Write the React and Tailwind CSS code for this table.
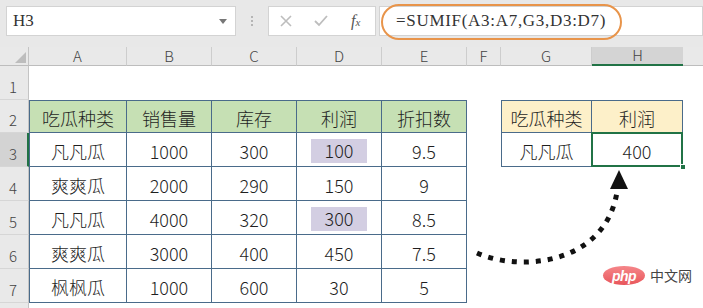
import React from "react";

const colWidths = "grid-cols-[29px_98px_85px_85px_85px_85px_34px_91px_91px_1fr]";
const rowHeights = "grid-rows-[19px_34px_33px_34px_34px_34px_34px_34px_34px]";

const tb = "border-[#4a6b8a]";

// main table rows (A..E)
const mainRows = [
  ["凡凡瓜", "1000", "300", "100", "9.5"],
  ["爽爽瓜", "2000", "290", "150", "9"],
  ["凡凡瓜", "4000", "320", "300", "8.5"],
  ["爽爽瓜", "3000", "400", "450", "7.5"],
  ["枫枫瓜", "1000", "600", "30", "5"],
];
const highlighted = ["100", "300"];

const RowHead = ({ n, active }) => (
  <div
    className={
      active
        ? "bg-[#d3d3d3] border-r-2 border-r-[#217346] border-b border-b-[#d6d6d6] flex items-end pl-[9px] pb-[1px] text-[15px] font-light text-[#444]"
        : "bg-[#e9e9e9] border-r border-r-[#c4c4c4] border-b border-b-[#d6d6d6] flex items-end pl-[9px] pb-[1px] text-[15px] font-light text-[#444]"
    }
  >
    {n}
  </div>
);

const ColHead = ({ label, active }) => (
  <div
    className={
      active
        ? "bg-[#d4d4d4] border-b-2 border-b-[#217346] flex items-center justify-center text-[15px] font-light text-[#444]"
        : "bg-[#e9e9e9] border-r border-r-[#cdcdcd] border-b border-b-[#bdbdbd] flex items-center justify-center text-[15px] font-light text-[#444]"
    }
  >
    {label}
  </div>
);

const cellText = "flex items-center justify-center pt-[4px] text-[18px] font-light text-[#1f1f1f]";

const App = () => {
  return (
    <div
      className="relative w-[703px] h-[308px] overflow-hidden bg-white"
      style={{ fontFamily: '"Noto Sans CJK SC", "Noto Sans", sans-serif' }}
    >
      {/* Formula bar */}
      <div className="h-[47px] bg-[#e8e8e8] flex items-start pt-[6px]">
        <div className="ml-[6px] w-[230px] h-[30px] bg-white border border-[#d3d3d3] flex items-center justify-between pl-[6px] pr-[6px]">
          <span
            className="text-[17px] text-[#333]"
            style={{ fontFamily: '"Liberation Serif", serif' }}
          >
            H3
          </span>
          <span className="w-0 h-0 border-l-[4px] border-r-[4px] border-t-[5px] border-l-transparent border-r-transparent border-t-[#777] mr-[2px]"></span>
        </div>
        <div className="w-[32px] h-[30px] flex flex-col items-center justify-center gap-[2px]">
          <span className="w-[2px] h-[2px] bg-[#b5b5b5]"></span>
          <span className="w-[2px] h-[2px] bg-[#b5b5b5]"></span>
          <span className="w-[2px] h-[2px] bg-[#b5b5b5]"></span>
        </div>
        <div className="w-[108px] h-[30px] bg-white border border-[#d3d3d3] flex items-center pl-[10px] gap-[20px]">
          <svg width="14" height="14" viewBox="0 0 14 14">
            <path d="M2 2 L12 12 M12 2 L2 12" stroke="#bdbdbd" strokeWidth="1.6" />
          </svg>
          <svg width="16" height="14" viewBox="0 0 16 14">
            <path d="M2 7 L6 11 L14 2" stroke="#bdbdbd" strokeWidth="1.8" fill="none" />
          </svg>
          <span
            className="italic text-[16px] text-[#555] ml-[2px]"
            style={{ fontFamily: '"Liberation Serif", serif' }}
          >
            f<span className="text-[11px]">x</span>
          </span>
        </div>
        <div className="ml-[3px] flex-1 h-[30px] bg-white border border-[#d3d3d3] flex items-center pl-[16px]">
          <span
            className="text-[17px] text-[#333] tracking-[0.7px]"
            style={{ fontFamily: '"Liberation Serif", serif' }}
          >
            =SUMIF(A3:A7,G3,D3:D7)
          </span>
        </div>
      </div>

      {/* Orange highlight around formula */}
      <div className="absolute left-[381px] top-[4px] w-[241px] h-[36px] rounded-full border-2 border-[#e8944a] pointer-events-none"></div>

      {/* Sheet grid */}
      <div className={`grid ${colWidths} ${rowHeights}`}>
        {/* column headers */}
        <div className="bg-[#e9e9e9] border-r border-r-[#c4c4c4] border-b border-b-[#bdbdbd] flex items-end justify-end pr-[2px] pb-[2px]">
          <span className="w-0 h-0 border-l-[11px] border-b-[11px] border-l-transparent border-b-[#bdbdbd]"></span>
        </div>
        {["A", "B", "C", "D", "E", "F", "G"].map((c) => (
          <ColHead key={c} label={c} />
        ))}
        <ColHead label="H" active />
        <div className="bg-[#e9e9e9] border-b border-b-[#bdbdbd]"></div>

        {/* row 1 */}
        <RowHead n="1" />
        <div className="col-span-9"></div>

        {/* row 2 - headers */}
        <RowHead n="2" />
        {["吃瓜种类", "销售量", "库存", "利润", "折扣数"].map((h, i) => (
          <div
            key={h}
            className={
              i === 0
                ? `bg-[#c6e0b4] border-l border-t border-r border-b ${tb} ${cellText}`
                : `bg-[#c6e0b4] border-t border-r border-b ${tb} ${cellText}`
            }
          >
            {h}
          </div>
        ))}
        <div></div>
        <div className={`bg-[#fdf0c9] border-l border-t border-r border-b ${tb} ${cellText}`}>
          吃瓜种类
        </div>
        <div className={`bg-[#fdf0c9] border-t border-r border-b ${tb} ${cellText}`}>
          利润
        </div>
        <div></div>

        {/* rows 3-7 */}
        {mainRows.map((r, ri) => (
          <React.Fragment key={ri}>
            <RowHead n={String(ri + 3)} active={ri === 0} />
            {r.map((v, ci) => (
              <div
                key={ci}
                className={
                  ci === 0
                    ? `border-l border-r border-b ${tb} ${cellText}`
                    : `border-r border-b ${tb} ${cellText}`
                }
              >
                {ci === 3 && highlighted.includes(v) ? (
                  <div className="w-[56px] h-[24px] bg-[#d3cee2] flex items-center justify-center mt-[-2px]">
                    {v}
                  </div>
                ) : (
                  v
                )}
              </div>
            ))}
            <div></div>
            {ri === 0 ? (
              <>
                <div className={`border-l border-r border-b ${tb} ${cellText}`}>
                  凡凡瓜
                </div>
                <div className={`relative border-r border-b ${tb} ${cellText}`}>
                  400
                  <div className="absolute -left-[1px] -top-[1px] right-[-1px] bottom-[-1px] border-2 border-[#217346]"></div>
                  <div className="absolute -right-[4px] -bottom-[4px] w-[6px] h-[6px] bg-[#217346] border border-white"></div>
                </div>
              </>
            ) : (
              <>
                <div></div>
                <div></div>
              </>
            )}
            <div></div>
          </React.Fragment>
        ))}

        {/* row 8 (partial) */}
        <RowHead n="" />
        <div className="col-span-9"></div>
      </div>

      {/* Dotted arrow */}
      <svg
        className="absolute left-0 top-0 pointer-events-none"
        width="703"
        height="308"
        viewBox="0 0 703 308"
      >
        <path
          d="M477 253 C520 272 605 265 617 192"
          fill="none"
          stroke="#111"
          strokeWidth="5"
          strokeDasharray="5 7"
        />
        <polygon points="619,170 610,189 628,189" fill="#111" />
      </svg>

      {/* watermark */}
      <div className="absolute left-[603px] top-[265px] flex items-center gap-[5px] pointer-events-none">
        <div className="w-[42px] h-[19px] rounded-[50%] bg-gradient-to-b from-[#f5868a] to-[#e8555b] flex items-center justify-center">
          <span
            className="italic font-bold text-[14px] leading-none text-white tracking-[-0.5px]"
            style={{ fontFamily: '"Liberation Sans", sans-serif' }}
          >
            php
          </span>
        </div>
        <span
          className="text-[14px] text-[#444]"
          style={{ fontFamily: '"Noto Sans CJK SC", sans-serif' }}
        >
          中文网
        </span>
      </div>
    </div>
  );
};

export default App;
